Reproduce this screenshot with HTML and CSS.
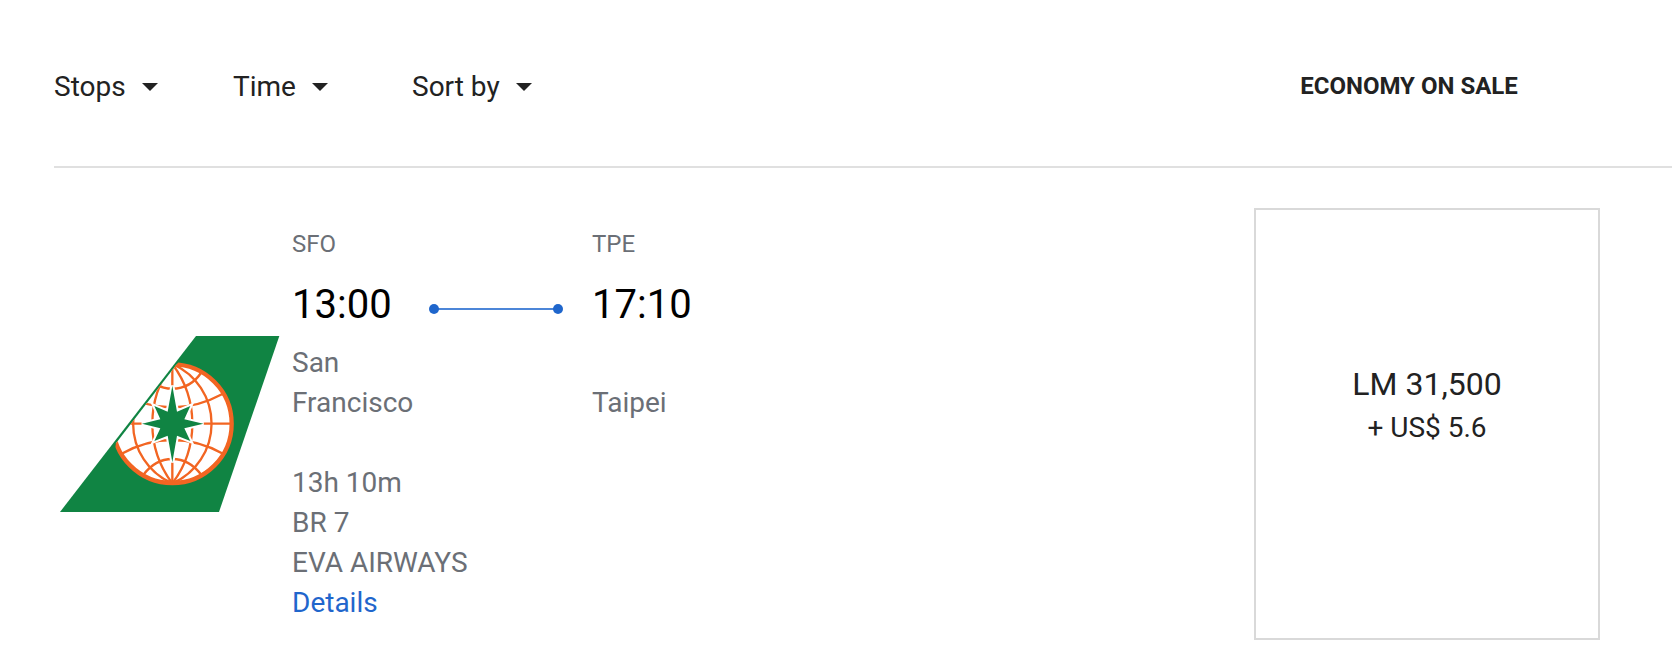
FILE: index.html
```html
<!DOCTYPE html>
<html lang="en">
<head>
<meta charset="utf-8">
<meta name="viewport" content="width=device-width, initial-scale=1">
<title>Flight results</title>
<link rel="stylesheet" href="styles.css">
</head>
<body>
<main class="results">
  <header class="toolbar">
    <div class="filters">
      <button class="filter" type="button" aria-haspopup="true">Stops <svg class="caret" viewBox="0 0 16 8" aria-hidden="true"><path d="M0 0H16L8 8Z"/></svg></button>
      <button class="filter" type="button" aria-haspopup="true">Time <svg class="caret" viewBox="0 0 16 8" aria-hidden="true"><path d="M0 0H16L8 8Z"/></svg></button>
      <button class="filter" type="button" aria-haspopup="true">Sort by <svg class="caret" viewBox="0 0 16 8" aria-hidden="true"><path d="M0 0H16L8 8Z"/></svg></button>
    </div>
    <h2 class="fare-title">ECONOMY ON SALE</h2>
  </header>

  <article class="flight">
    <svg class="logo" viewBox="60 48 660 528" role="img" aria-label="EVA Airways">
      <defs>
        <clipPath id="tail"><path d="M415 127L228 370L200 540H640V100H436Z"/></clipPath>
        <clipPath id="disc"><circle cx="397" cy="311" r="178"/></clipPath>
      </defs>
      <path fill="#108443" d="M60 576L468 48H718L537 576Z"/>
      <g clip-path="url(#tail)">
        <circle cx="397" cy="311" r="178" fill="#fff"/>
        <g clip-path="url(#disc)" fill="none" stroke="#f26522" stroke-width="7">
          <path d="M397 132V490M219 311H577"/>
          <path d="M397 132A195 195 0 0 1 397 490A195 195 0 0 1 397 132"/>
          <path d="M397 132A297 297 0 0 1 397 490A297 297 0 0 1 397 132"/>
          <path d="M309 156Q342 206 397 206T485 156"/>
          <path d="M245 221Q321 262 397 262T549 221"/>
          <path d="M309 156Q345 206 397 206Q449 206 485 156M245 221Q321 262 397 262Q473 262 549 221" stroke="none"/>
          <path d="M245 401Q321 360 397 360Q473 360 549 401"/>
          <path d="M309 466Q345 417 397 417Q449 417 485 466"/>
        </g>
        <circle cx="397" cy="311" r="178" fill="none" stroke="#f26522" stroke-width="13"/>
        <path fill="#108443" stroke="#fff" stroke-width="12" paint-order="stroke" d="M397 197L411 275L451 258L433 298L490 311L433 325L451 363L411 347L397 427L383 347L343 363L361 325L306 311L361 298L343 258L383 275Z"/>
      </g>
    </svg>

    <div class="details">
      <div class="route">
        <span class="code">SFO</span>
        <span class="code arrival">TPE</span>
        <time class="time">13:00</time>
        <svg class="leg" viewBox="0 0 134 10" aria-hidden="true"><path d="M5 5H129" stroke="#4c86d8" stroke-width="2"/><circle cx="5" cy="5" r="5"/><circle cx="129" cy="5" r="5"/></svg>
        <time class="time">17:10</time>
        <span class="city">San Francisco</span>
        <span class="city arrival">Taipei</span>
      </div>
      <ul class="facts">
        <li>13h 10m</li>
        <li>BR 7</li>
        <li>EVA AIRWAYS</li>
        <li><a class="link" href="#details">Details</a></li>
      </ul>
    </div>

    <button class="fare" type="button">
      <span class="miles">LM 31,500</span>
      <span class="tax">+ US$ 5.6</span>
    </button>
  </article>
</main>
</body>
</html>
```
FILE: styles.css
```css
* {
  box-sizing: border-box;
}

body {
  margin: 0;
  background: #fff;
  color: #222;
  font-family: Roboto, "Liberation Sans", sans-serif;
  font-size: 28px;
  line-height: 40px;
}

.results {
  padding-left: 54px;
}

.toolbar {
  display: flex;
  justify-content: space-between;
  align-items: flex-start;
  padding: 67px 72px 59px 0;
  border-bottom: 2px solid #e0e0e0;
}

.filters {
  display: grid;
  grid-template-columns: repeat(3, 179px);
}

.filter {
  display: flex;
  align-items: center;
  gap: 16px;
  padding: 0;
  border: 0;
  background: none;
  color: inherit;
  font: inherit;
  cursor: pointer;
}

.caret {
  width: 16px;
  height: 8px;
  fill: #222;
}

.fare-title {
  width: 346px;
  margin: 0;
  padding-right: 36px;
  font-size: 24px;
  font-weight: 700;
  line-height: 38px;
  text-align: center;
}

.flight {
  display: grid;
  grid-template-columns: 220px 1fr 346px;
  padding: 40px 72px 28px 6px;
}

.logo {
  align-self: center;
  width: 220px;
  height: 176px;
}

.details {
  padding: 20px 0 17px 12px;
  color: #6b6f76;
}

.route {
  display: grid;
  grid-template-columns: 137px 163px 1fr;
}

.code {
  font-size: 24px;
  line-height: 32px;
}

.arrival {
  grid-column: 3;
}

.time {
  margin: 21px 0 14px;
  color: #000;
  font-size: 40px;
  line-height: 48px;
}

.leg {
  align-self: center;
  width: 134px;
  height: 10px;
  margin-top: 15px;
  fill: #1f66cc;
}

.city {
  align-self: end;
}

.facts {
  margin: 40px 0 0;
  padding: 0;
  list-style: none;
}

.link {
  color: #1f66cc;
  text-decoration: none;
}

.fare {
  display: flex;
  flex-direction: column;
  align-items: center;
  justify-content: center;
  padding: 0 0 36px;
  border: 2px solid #d9d9d9;
  background: #fff;
  color: inherit;
  font: inherit;
  line-height: 44px;
  cursor: pointer;
}

.miles {
  font-size: 32px;
}
```
